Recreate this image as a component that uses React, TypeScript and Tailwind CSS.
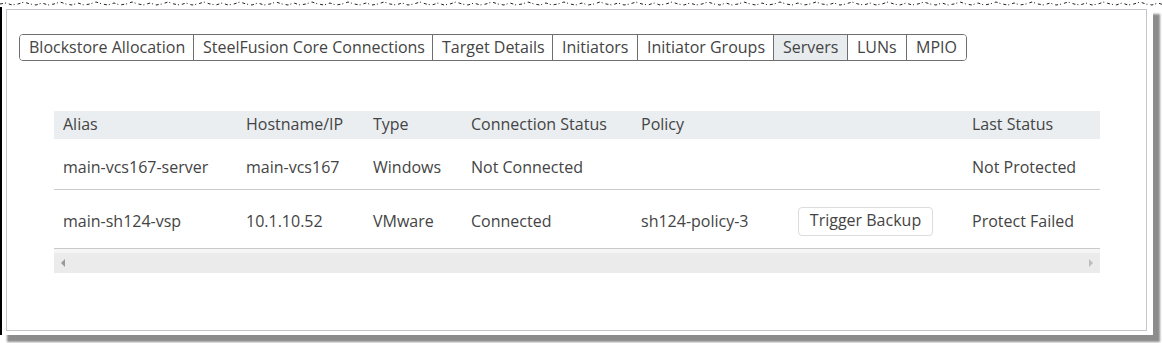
import React from "react";

const tabs = [
  { label: "Blockstore Allocation", w: "w-[174px]" },
  { label: "SteelFusion Core Connections", w: "w-[239px]" },
  { label: "Target Details", w: "w-[120px]" },
  { label: "Initiators", w: "w-[85px]" },
  { label: "Initiator Groups", w: "w-[136px]" },
  { label: "Servers", w: "w-[74px]", active: true },
  { label: "LUNs", w: "w-[59px]" },
  { label: "MPIO", w: "w-[59px]", last: true },
];

const rows = [
  {
    alias: "main-vcs167-server",
    host: "main-vcs167",
    type: "Windows",
    conn: "Not Connected",
    policy: "",
    button: false,
    status: "Not Protected",
  },
  {
    alias: "main-sh124-vsp",
    host: "10.1.10.52",
    type: "VMware",
    conn: "Connected",
    policy: "sh124-policy-3",
    button: true,
    status: "Protect Failed",
  },
];

function TornEdge() {
  // jagged dashed line across the top of the capture
  let d = "M0 4";
  for (let x = 0; x < 1162; x += 6) {
    const y = [3, 5, 4, 2, 4, 5][(x / 6) % 6];
    d += ` L${x + 6} ${y}`;
  }
  return (
    <svg width="1162" height="7" className="block">
      <path d={d} fill="none" stroke="#222" strokeWidth="1" strokeDasharray="3 2 1 3" />
    </svg>
  );
}

export default function App() {
  return (
    <div className="w-[1162px] h-[343px] bg-white overflow-hidden font-['Open_Sans',sans-serif] text-[#444]">
      <TornEdge />
      <div className="w-[1153px] h-[328px] border-l-2 border-black bg-white pl-[4px] pr-[6px] pt-[2px] pb-[4px] shadow-[7px_7px_2px_rgba(0,0,0,0.45)]">
        <div className="h-full border border-[#c3c7cb] pl-[12px] pt-[24px]">
          <div className="inline-flex h-[27px] border border-[#6e6e6e] rounded-[4px] overflow-hidden text-[16px]">
            {tabs.map((t) => (
              <div
                key={t.label}
                className={`${t.w} flex items-center pl-[9px] pb-[2px] leading-none ${
                  t.last ? "" : "border-r border-[#6e6e6e]"
                } ${t.active ? "bg-[#e8ecef]" : "bg-white"}`}
              >
                {t.label}
              </div>
            ))}
          </div>

          <div className="ml-[35px] mt-[50px] w-[1046px] text-[16px]">
            <table className="w-full border-collapse table-fixed">
              <colgroup>
                <col className="w-[183px]" />
                <col className="w-[127px]" />
                <col className="w-[98px]" />
                <col className="w-[170px]" />
                <col className="w-[157px]" />
                <col className="w-[174px]" />
                <col />
              </colgroup>
              <thead>
                <tr className="bg-[#eaeef1] h-[28px] text-left">
                  <th className="font-normal pl-[9px] pb-[2px] leading-none">Alias</th>
                  <th className="font-normal pl-[9px] pb-[2px] leading-none">Hostname/IP</th>
                  <th className="font-normal pl-[9px] pb-[2px] leading-none">Type</th>
                  <th className="font-normal pl-[9px] pb-[2px] leading-none">Connection Status</th>
                  <th className="font-normal pl-[9px] pb-[2px] leading-none">Policy</th>
                  <th className="font-normal pl-[9px] pb-[2px] leading-none"></th>
                  <th className="font-normal pl-[9px] pb-[2px] leading-none">Last Status</th>
                </tr>
              </thead>
              <tbody>
                {rows.map((r, i) => {
                  const cell = i === 0 ? "pl-[9px] pt-[6px]" : "pl-[9px] pt-[4px]";
                  return (
                    <tr
                      key={r.alias}
                      className={`border-b border-[#c8cbce] leading-none ${i === 0 ? "h-[50px]" : "h-[59px]"}`}
                    >
                      <td className={cell}>{r.alias}</td>
                      <td className={cell}>{r.host}</td>
                      <td className={cell}>{r.type}</td>
                      <td className={cell}>{r.conn}</td>
                      <td className={cell}>{r.policy}</td>
                      <td className={cell}>
                        {r.button && (
                          <button className="mt-[1px] w-[135px] h-[29px] border border-[#dcdcdc] rounded-[4px] bg-white text-[16px] text-[#444] leading-none pb-[3px]">
                            Trigger Backup
                          </button>
                        )}
                      </td>
                      <td className={cell}>{r.status}</td>
                    </tr>
                  );
                })}
              </tbody>
            </table>
            <div className="h-[24px] border-t-[4px] border-[#f5f5f5] bg-[#ebebeb] flex items-center justify-between px-[6px]">
              <svg width="6" height="10" viewBox="0 0 6 10">
                <path d="M5 1 L1 5 L5 9 Z" fill="#9a9a9a" />
              </svg>
              <svg width="6" height="10" viewBox="0 0 6 10">
                <path d="M1 1 L5 5 L1 9 Z" fill="#bdbdbd" />
              </svg>
            </div>
          </div>
        </div>
      </div>
    </div>
  );
}
